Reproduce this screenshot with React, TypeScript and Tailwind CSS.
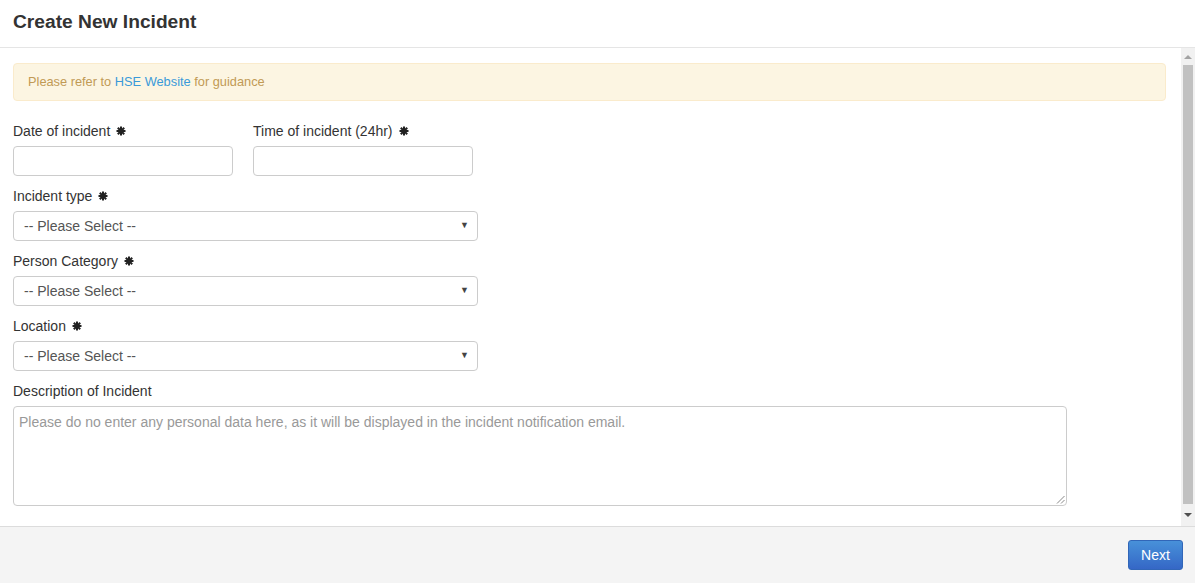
import React from "react";

const font = { fontFamily: '"Liberation Sans", Arial, sans-serif' };

function Required() {
  return (
    <svg width="10" height="10" viewBox="0 0 10 10" className="ml-[6px] inline-block align-[-1px]">
      <g stroke="#222" strokeWidth="2" strokeLinecap="butt">
        <line x1="5" y1="0.5" x2="5" y2="9.5" />
        <line x1="0.5" y1="5" x2="9.5" y2="5" />
        <line x1="1.8" y1="1.8" x2="8.2" y2="8.2" />
        <line x1="8.2" y1="1.8" x2="1.8" y2="8.2" />
      </g>
      <circle cx="5" cy="5" r="2.2" fill="#222" />
    </svg>
  );
}

function Label({ text, required }: { text: string; required?: boolean }) {
  return (
    <div className="flex h-[20px] items-center text-[14px] leading-[20px] text-[#333]">
      <span>{text}</span>
      {required ? <Required /> : null}
    </div>
  );
}

function SelectBox() {
  return (
    <div className="mt-[5px] flex h-[30px] w-[465px] items-center justify-between rounded-[4px] border border-[#ccc] bg-white pl-[10px] pr-[8px] text-[14px] text-[#555]">
      <span>-- Please Select --</span>
      <span className="text-[9px] text-[#444]">▼</span>
    </div>
  );
}

function Scrollbar() {
  return (
    <div className="flex w-[14px] shrink-0 flex-col bg-[#f1f1f1]">
      <div className="flex h-[17px] items-center justify-center">
        <div className="h-0 w-0 border-x-[4px] border-b-[4px] border-x-transparent border-b-[#a3a3a3]" />
      </div>
      <div className="mx-[2px] flex-1 bg-[#c1c1c1]" />
      <div className="flex h-[22px] items-center justify-center">
        <div className="h-0 w-0 border-x-[4px] border-t-[4px] border-x-transparent border-t-[#505050]" />
      </div>
    </div>
  );
}

export default function App() {
  return (
    <div className="flex h-[583px] w-[1195px] flex-col bg-white" style={font}>
      <header className="flex h-[48px] shrink-0 items-center border-b border-[#e5e5e5] px-[13px] pb-[2px]">
        <h1 className="text-[19.2px] font-bold text-[#333]">Create New Incident</h1>
      </header>

      <div className="flex min-h-0 flex-1">
        <div className="flex-1 pl-[13px] pr-[15px] pt-[15px]">
          <div className="flex h-[38px] items-center rounded-[4px] border border-[#faebcc] bg-[#fcf5e2] px-[14px] text-[12.8px] text-[#c19a55]">
            Please refer to&nbsp;<span className="text-[#3a9ad9]">HSE Website</span>&nbsp;for guidance
          </div>

          <div className="mt-[20px] flex gap-[20px]">
            <div className="flex w-[220px] flex-col">
              <Label text="Date of incident" required />
              <div className="mt-[5px] h-[30px] rounded-[4px] border border-[#ccc] bg-white" />
            </div>
            <div className="flex w-[220px] flex-col">
              <Label text="Time of incident (24hr)" required />
              <div className="mt-[5px] h-[30px] rounded-[4px] border border-[#ccc] bg-white" />
            </div>
          </div>

          <div className="mt-[10px]">
            <Label text="Incident type" required />
            <SelectBox />
          </div>
          <div className="mt-[10px]">
            <Label text="Person Category" required />
            <SelectBox />
          </div>
          <div className="mt-[10px]">
            <Label text="Location" required />
            <SelectBox />
          </div>
          <div className="mt-[10px]">
            <Label text="Description of Incident" />
            <div className="relative mt-[5px] h-[100px] w-[1054px] rounded-[4px] border border-[#ccc] bg-white px-[5px] py-[5px] text-[14px] leading-[20px] text-[#999]">
              Please do no enter any personal data here, as it will be displayed in the incident notification email.
              <svg width="9" height="9" viewBox="0 0 9 9" className="absolute bottom-[1px] right-[1px]">
                <g stroke="#888" strokeWidth="1">
                  <line x1="8.5" y1="1" x2="1" y2="8.5" />
                  <line x1="8.5" y1="5" x2="5" y2="8.5" />
                </g>
              </svg>
            </div>
          </div>
        </div>
        <Scrollbar />
      </div>

      <footer className="flex h-[57px] shrink-0 items-center justify-end border-t border-[#dcdcdc] bg-[#f4f4f4] pr-[12px]">
        <button
          type="button"
          className="h-[30px] w-[55px] rounded-[3px] border border-[#3166b8] bg-gradient-to-b from-[#4891d9] to-[#3567c6] text-[14px] text-white"
        >
          Next
        </button>
      </footer>
    </div>
  );
}
